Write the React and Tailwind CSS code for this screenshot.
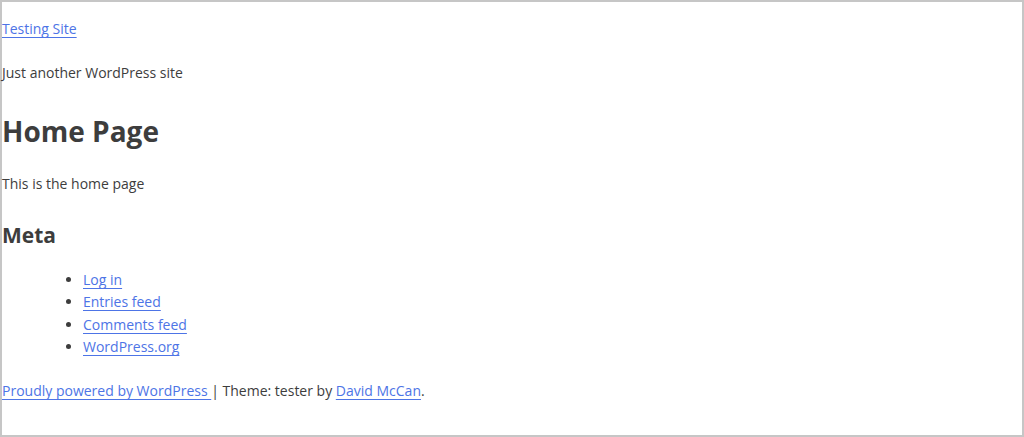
const links = ['Log in', 'Entries feed', 'Comments feed', 'WordPress.org']

const A = ({ children }) => (
  <a href="#" className="text-[#4d74e6] underline underline-offset-[3px]">
    {children}
  </a>
)

export default function App() {
  return (
    <div className="h-[437px] w-[1024px] border-2 border-[#c6c6c6] bg-white font-['Open_Sans',sans-serif] text-[14px] leading-[22px] text-[#3d3d3d]">
      <p className="mt-[16px]">
        <A>Testing Site</A>
      </p>
      <p className="mt-[22px]">Just another WordPress site</p>
      <h1 className="mt-[30px] text-[28px] font-bold leading-[34px]">Home Page</h1>
      <p className="mt-[25px]">This is the home page</p>
      <h2 className="mt-[26px] text-[21px] font-bold leading-[28px]">Meta</h2>
      <ul className="mt-[20px] list-disc pl-[81px]">
        {links.map((l) => (
          <li key={l} className="leading-[22.3px]">
            <A>{l}</A>
          </li>
        ))}
      </ul>
      <p className="mt-[22px]">
        <A>Proudly powered by WordPress </A>| Theme: tester by <A>David McCan</A>.
      </p>
    </div>
  )
}
